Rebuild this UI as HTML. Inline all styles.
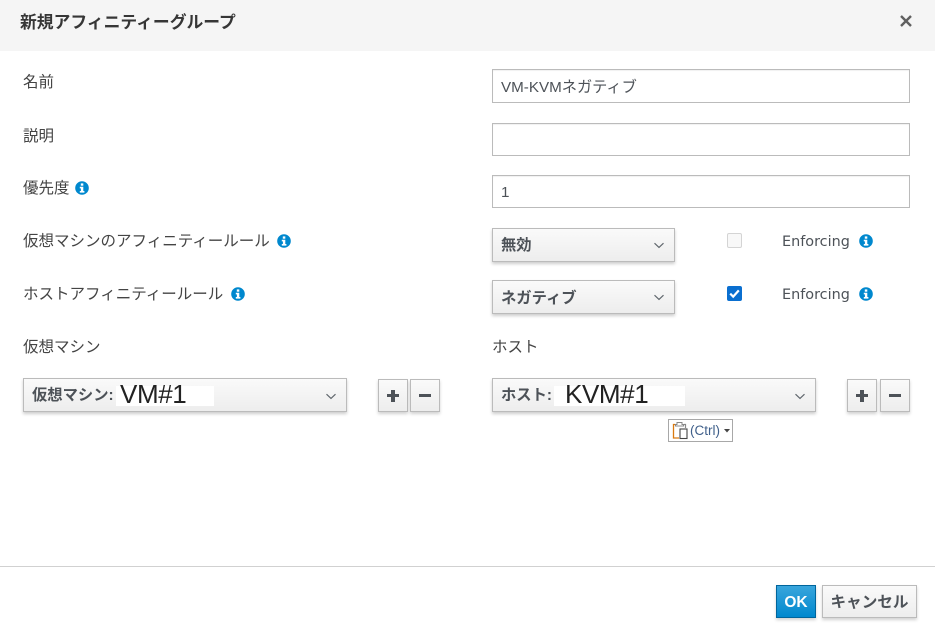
<!DOCTYPE html>
<html lang="ja"><head><meta charset="utf-8">
<style>
*{box-sizing:border-box}
html,body{margin:0;padding:0;width:935px;height:631px;overflow:hidden;background:#fff;position:relative}
body{font-family:"Liberation Sans","Noto Sans CJK JP",sans-serif;color:#363636;font-size:14px}
.a{position:absolute;white-space:nowrap}
.lb{line-height:20px;font-size:15.5px;color:#444}
.inp{position:absolute;left:492px;width:418px;height:33px;border:1px solid #bbb;background:#fff;box-shadow:inset 0 1px 1px rgba(0,0,0,.06);padding:0 8px;line-height:33px;font-size:15.2px;color:#4d5258}
.sel{position:absolute;height:34px;border:1px solid #bbb;background:linear-gradient(#fafafa,#ededed);box-shadow:0 2px 3px rgba(0,0,0,.2);font-weight:bold;font-size:15.3px;color:#4d5258;line-height:34px;padding-left:8px;white-space:nowrap}
.sel svg{position:absolute;top:13px}
.btn{position:absolute;top:379px;width:30px;height:33px;border:1px solid #bbb;background:linear-gradient(#fafafa,#ededed);box-shadow:0 2px 3px rgba(0,0,0,.18)}
.btn i{position:absolute;background:#4d5258}
.info{position:absolute;width:14px;height:14px}
.en{position:absolute;left:782px;font-family:"DejaVu Sans",sans-serif;font-size:14.4px;color:#4d5258;line-height:20px}
.mask{position:absolute;background:#fff;top:7px;height:20px;font-weight:normal;color:#222;font-size:26px;letter-spacing:-.4px;line-height:17px}
</style></head><body>
<svg width="0" height="0" style="position:absolute"><defs>
<symbol id="i" viewBox="0 0 14 14"><circle cx="7" cy="7" r="6.8" fill="#0088ce"/><rect x="5.8" y="2.4" width="2.5" height="2.3" fill="#fff"/><path d="M4.8 5.8H8.3V10H9.4V11.6H4.8V10H5.9V7.4H4.8Z" fill="#fff"/></symbol>
<symbol id="c" viewBox="0 0 12 7"><path d="M1.5 1.2L6 5.4L10.5 1.2" fill="none" stroke="#5f666c" stroke-width="1.2"/></symbol>
</defs></svg>

<div class="a" style="left:0;top:0;width:935px;height:51px;background:#f5f5f5"></div>
<div class="a" style="left:20px;top:12px;font-size:16.8px;line-height:22px;font-weight:bold;color:#363636">新規アフィニティーグループ</div>
<svg class="a" style="left:899px;top:14px" width="14" height="14" viewBox="0 0 14 14"><path d="M2 2L12 12M12 2L2 12" stroke="#606060" stroke-width="2.4"/></svg>

<div class="a lb" style="left:23px;top:73px">名前</div>
<div class="a lb" style="left:23px;top:127px">説明</div>
<div class="a lb" style="left:23px;top:179px">優先度</div>
<svg class="info" style="left:75px;top:181px"><use href="#i"/></svg>
<div class="a lb" style="left:23px;top:232px">仮想マシンのアフィニティールール</div>
<svg class="info" style="left:277px;top:234px"><use href="#i"/></svg>
<div class="a lb" style="left:23px;top:285px">ホストアフィニティールール</div>
<svg class="info" style="left:231px;top:287px"><use href="#i"/></svg>
<div class="a lb" style="left:23px;top:338px">仮想マシン</div>
<div class="a lb" style="left:492px;top:338px">ホスト</div>

<div class="inp" style="top:69px;height:34px;line-height:36px">VM-KVMネガティブ</div>
<div class="inp" style="top:123px"></div>
<div class="inp" style="top:175px">1</div>

<div class="sel" style="left:492px;top:228px;width:183px">無効<svg style="left:160px" width="12" height="7"><use href="#c"/></svg></div>
<div class="sel" style="left:492px;top:280px;width:183px;line-height:36px">ネガティブ<svg style="left:160px" width="12" height="7"><use href="#c"/></svg></div>

<div class="a" style="left:727px;top:233px;width:15px;height:15px;border:1px solid #d4d4d4;border-radius:2px;background:#f8f8f8"></div>
<svg class="a" style="left:727px;top:286px" width="15" height="15" viewBox="0 0 15 15"><rect width="15" height="15" rx="2" fill="#0a6fd0"/><path d="M3.2 7.6L6.2 10.6L11.8 4.4" fill="none" stroke="#fff" stroke-width="2.2"/></svg>
<div class="en" style="top:232px">Enforcing</div>
<div class="en" style="top:285px">Enforcing</div>
<svg class="info" style="left:859px;top:234px"><use href="#i"/></svg>
<svg class="info" style="left:859px;top:287px"><use href="#i"/></svg>

<div class="sel" style="left:23px;top:378px;width:324px">仮想マシン:
  <div class="mask" style="left:92px;width:98px;padding-left:4px">VM#1</div>
  <svg style="left:301px;top:14px" width="12" height="7"><use href="#c"/></svg></div>
<div class="sel" style="left:492px;top:378px;width:324px">ホスト:
  <div class="mask" style="left:61px;width:131px;padding-left:11px">KVM#1</div>
  <svg style="left:301px;top:14px" width="12" height="7"><use href="#c"/></svg></div>

<div class="btn" style="left:378px"><i style="left:8px;top:14px;width:12px;height:3.4px"></i><i style="left:12.3px;top:10px;width:3.4px;height:12px"></i></div>
<div class="btn" style="left:410px"><i style="left:8px;top:14px;width:12px;height:3.4px"></i></div>
<div class="btn" style="left:847px"><i style="left:8px;top:14px;width:12px;height:3.4px"></i><i style="left:12.3px;top:10px;width:3.4px;height:12px"></i></div>
<div class="btn" style="left:880px"><i style="left:8px;top:14px;width:12px;height:3.4px"></i></div>

<div class="a" style="left:668px;top:419px;width:65px;height:23px;border:1px solid #a8a8a8;background:#fff"></div>
<svg class="a" style="left:672px;top:421px" width="18" height="19" viewBox="0 0 18 19"><path d="M3 3.5H1.5V17H7" fill="none" stroke="#d97a10" stroke-width="1.3"/><path d="M12 3.5H13.5V7" fill="none" stroke="#888" stroke-width="1.2"/><path d="M5 3.5V1.5H10V3.5H11.5V5H3.5V3.5Z" fill="none" stroke="#888" stroke-width="1"/><rect x="8" y="8" width="7" height="9.5" fill="#fff" stroke="#444" stroke-width="1.1"/></svg>
<div class="a" style="left:690px;top:422px;font-size:13.5px;line-height:18px;color:#3f5f8a">(Ctrl)</div>
<svg class="a" style="left:724px;top:429px" width="6" height="4"><path d="M0 0H6L3 3.5Z" fill="#444"/></svg>

<div class="a" style="left:0;top:566px;width:935px;height:1px;background:#d1d1d1"></div>
<div class="a" style="left:776px;top:585px;width:40px;height:33px;border:1px solid #00659c;background:linear-gradient(#39a5dc,#0088ce);box-shadow:0 2px 3px rgba(0,0,0,.18);color:#fff;font-weight:bold;font-size:15.5px;line-height:33px;text-align:center">OK</div>
<div class="a" style="left:822px;top:585px;width:95px;height:33px;border:1px solid #bbb;background:linear-gradient(#fafafa,#ededed);box-shadow:0 2px 3px rgba(0,0,0,.18);color:#4d5258;font-weight:bold;font-size:15.6px;line-height:33px;text-align:center">キャンセル</div>
</body></html>
